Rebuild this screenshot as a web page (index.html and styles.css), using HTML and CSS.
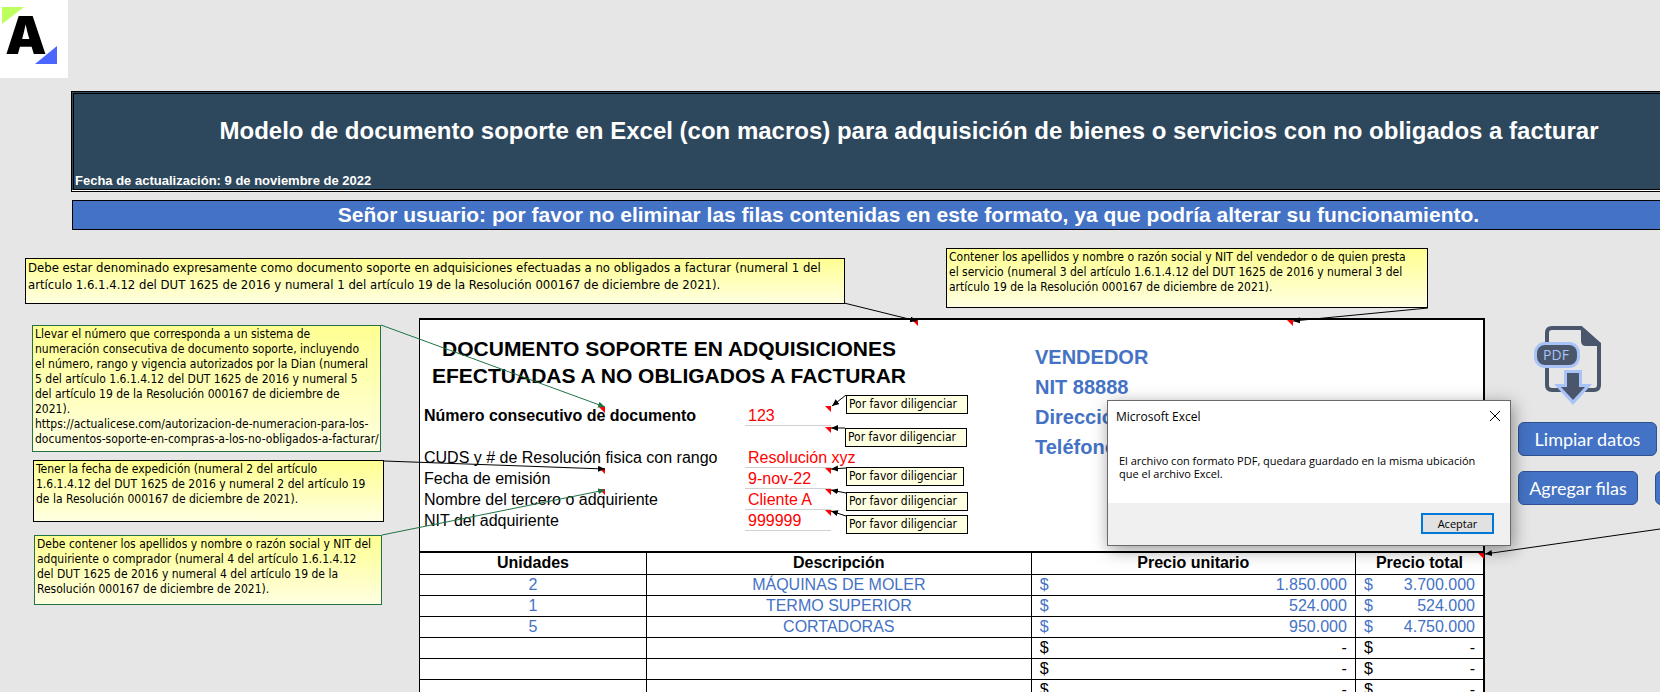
FILE: index.html
```html
<!DOCTYPE html>
<html lang="es">
<head>
<meta charset="utf-8">
<title>Modelo de documento soporte</title>
<link rel="stylesheet" href="styles.css">
</head>
<body>
<div class="logo">
  <svg width="68" height="78" viewBox="0 0 68 78" role="img" aria-label="Actualícese">
    <path d="M2 7H24L2 24Z" fill="#bdff5c"/>
    <path d="M57 46V64H35Z" fill="#4a66ff"/>
    <text class="logo-letter" x="26" y="54" text-anchor="middle">A</text>
  </svg>
</div>
<header class="banner">
  <div class="banner-inner">
    <h1 class="banner-title">Modelo de documento soporte en Excel (con macros) para adquisición de bienes o servicios con no obligados a facturar</h1>
    <p class="banner-date">Fecha de actualización: 9 de noviembre de 2022</p>
  </div>
</header>
<p class="notice">Señor usuario: por favor no eliminar las filas contenidas en este formato, ya que podría alterar su funcionamiento.</p>

<main class="workspace">
  <section class="sheet">
    <div class="sheet-head">
      <div class="doc">
        <h2 class="doc-title">DOCUMENTO SOPORTE EN ADQUISICIONES<br>EFECTUADAS A NO OBLIGADOS A FACTURAR</h2>
        <dl class="fields">
          <dt class="strong">Número consecutivo de documento</dt><dd>123</dd>
          <dt></dt><dd class="blank"></dd>
          <dt>CUDS y # de Resolución fisica con rango</dt><dd>Resolución xyz</dd>
          <dt>Fecha de emisión</dt><dd>9-nov-22</dd>
          <dt>Nombre del tercero o adquiriente</dt><dd>Cliente A</dd>
          <dt>NIT del adquiriente</dt><dd>999999</dd>
        </dl>
      </div>
      <div class="vendor">
        <p>VENDEDOR</p>
        <p>NIT 88888</p>
        <p>Dirección</p>
        <p>Teléfono</p>
      </div>
    </div>
    <table class="items">
      <colgroup><col class="c-units"><col class="c-desc"><col class="c-price"><col class="c-total"></colgroup>
      <thead><tr><th>Unidades</th><th>Descripción</th><th>Precio unitario</th><th>Precio total</th></tr></thead>
      <tbody>
        <tr class="filled"><td>2</td><td>MÁQUINAS DE MOLER</td><td><div class="money"><span>$</span><span>1.850.000</span></div></td><td><div class="money"><span>$</span><span>3.700.000</span></div></td></tr>
        <tr class="filled"><td>1</td><td>TERMO SUPERIOR</td><td><div class="money"><span>$</span><span>524.000</span></div></td><td><div class="money"><span>$</span><span>524.000</span></div></td></tr>
        <tr class="filled"><td>5</td><td>CORTADORAS</td><td><div class="money"><span>$</span><span>950.000</span></div></td><td><div class="money"><span>$</span><span>4.750.000</span></div></td></tr>
        <tr><td></td><td></td><td><div class="money"><span>$</span><span>-</span></div></td><td><div class="money"><span>$</span><span>-</span></div></td></tr>
        <tr><td></td><td></td><td><div class="money"><span>$</span><span>-</span></div></td><td><div class="money"><span>$</span><span>-</span></div></td></tr>
        <tr><td></td><td></td><td><div class="money"><span>$</span><span>-</span></div></td><td><div class="money"><span>$</span><span>-</span></div></td></tr>
      </tbody>
    </table>
  </section>
  <aside class="actions">
    <svg class="pdf-icon" width="68" height="82" viewBox="0 0 68 82" role="img" aria-label="Descargar PDF">
      <path d="M47 3H18Q13 3 13 8V60Q13 65 18 65H60Q65 65 65 60V19Z" fill="none" stroke="#4a566c" stroke-width="4"/>
      <path d="M47 2L67 21H52Q47 21 47 16Z" fill="#4a566c"/>
      <rect x="0" y="17" width="46" height="26" rx="11" fill="#a9c3f7"/>
      <rect x="3" y="20" width="40" height="20" rx="8" fill="#4a566c"/>
      <path d="M30 45H48V59H58L39 80L20 59H30Z" fill="#a9c3f7"/>
      <path d="M33 48H45V62H51L39 75L27 62H33Z" fill="#4a566c"/>
      <text class="pdf-label" x="22" y="35" text-anchor="middle">PDF</text>
    </svg>
    <button class="btn btn-wide" type="button">Limpiar datos</button>
    <div class="btn-row">
      <button class="btn" type="button">Agregar filas</button>
      <button class="btn" type="button" aria-label="Más acciones"></button>
    </div>
  </aside>
</main>

<svg class="connectors" width="1660" height="692" aria-hidden="true">
  <defs>
    <marker id="arrow" markerWidth="8" markerHeight="8" refX="7" refY="3" orient="auto" markerUnits="userSpaceOnUse"><path d="M0 0L7 3L0 6Z" fill="#000"/></marker>
    <marker id="arrow-green" markerWidth="8" markerHeight="8" refX="7" refY="3" orient="auto" markerUnits="userSpaceOnUse"><path d="M0 0L7 3L0 6Z" fill="#217346"/></marker>
  </defs>
  <path class="flag" d="M912 320h6v6zM1287 320h6v6zM599 407h6v6zM599 468h6v6zM599 489h6v6zM825 406h6v6zM825 427h6v6zM825 468h6v6zM825 489h6v6zM825 510h6v6zM1478 553h6v6z"/>
  <path class="link" d="M844 303L917 321"/>
  <path class="link" d="M1428 308L1293 321"/>
  <path class="link green" d="M381 325L605 407"/>
  <path class="link" d="M384 461L605 469"/>
  <path class="link green" d="M382 535L605 490"/>
  <path class="link" d="M846 395L832 406"/>
  <path class="link" d="M845 428L831 428"/>
  <path class="link" d="M846 468L831 469"/>
  <path class="link" d="M846 493L831 490"/>
  <path class="link" d="M846 516L831 511"/>
  <path class="link" d="M1660 529L1485 554"/>
</svg>

<div class="note n-name">Debe estar denominado expresamente como documento soporte en adquisiciones efectuadas a no obligados a facturar (numeral 1 del<br>artículo 1.6.1.4.12 del DUT 1625 de 2016 y numeral 1 del artículo 19 de la Resolución 000167 de diciembre de 2021).</div>
<div class="note n-seller">Contener los apellidos y nombre o razón social y NIT del vendedor o de quien presta<br>el servicio (numeral 3 del artículo 1.6.1.4.12 del DUT 1625 de 2016 y numeral 3 del<br>artículo 19 de la Resolución 000167 de diciembre de 2021).</div>
<div class="note green n-number">Llevar el número que corresponda a un sistema de<br>numeración consecutiva de documento soporte, incluyendo<br>el número, rango y vigencia autorizados por la Dian (numeral<br>5 del artículo 1.6.1.4.12 del DUT 1625 de 2016 y numeral 5<br>del artículo 19 de la Resolución 000167 de diciembre de<br>2021).<br>https://actualicese.com/autorizacion-de-numeracion-para-los-<br>documentos-soporte-en-compras-a-los-no-obligados-a-facturar/</div>
<div class="note n-date">Tener la fecha de expedición (numeral 2 del artículo<br>1.6.1.4.12 del DUT 1625 de 2016 y numeral 2 del artículo 19<br>de la Resolución 000167 de diciembre de 2021).</div>
<div class="note green n-buyer">Debe contener los apellidos y nombre o razón social y NIT del<br>adquiriente o comprador (numeral 4 del artículo 1.6.1.4.12<br>del DUT 1625 de 2016 y numeral 4 del artículo 19 de la<br>Resolución 000167 de diciembre de 2021).</div>
<div class="tip t1">Por favor diligenciar</div>
<div class="tip t2">Por favor diligenciar</div>
<div class="tip t3">Por favor diligenciar</div>
<div class="tip t4">Por favor diligenciar</div>
<div class="tip t5">Por favor diligenciar</div>

<div class="dialog" role="dialog" aria-labelledby="dlg-title">
  <div class="dialog-bar">
    <span id="dlg-title">Microsoft Excel</span>
    <button class="close" type="button" aria-label="Cerrar"><svg width="12" height="12" viewBox="0 0 12 12"><path d="M1 1L11 11M11 1L1 11" stroke="#000" fill="none"/></svg></button>
  </div>
  <p class="dialog-text">El archivo con formato PDF, quedara guardado en la misma ubicación<br>que el archivo Excel.</p>
  <div class="dialog-foot"><button class="ok" type="button">Aceptar</button></div>
</div>
</body>
</html>
```
FILE: styles.css
```css
* { box-sizing: border-box; }
body {
  margin: 0;
  min-height: 100vh;
  height: 100vh;
  overflow: hidden;
  position: relative;
  background: #e6e6e6;
  color: #000;
  font-family: "Liberation Sans", Arial, sans-serif;
}
h1, h2, p, dl, dd { margin: 0; }
button { font: inherit; padding: 0; }

.logo { width: 68px; height: 78px; background: #fff; }
.logo svg { display: block; }
.logo-letter { font: 900 52px Inter, sans-serif; }

.banner {
  margin: 13px 0 0 71px;
  border: 1px solid #000;
  border-right: 0;
  padding: 1px 0 1px 1px;
  background: linear-gradient(#fff, #fff) bottom / 100% 1px no-repeat padding-box, #2d475c;
}
.banner-inner {
  display: flex;
  flex-direction: column;
  height: 97px;
  border: 1px solid #000;
  border-right: 0;
  color: #fff;
  font-weight: bold;
}
.banner-title {
  flex: 1;
  padding: 22px 0 0 84px;
  text-align: center;
  font-size: 24px;
  line-height: 30px;
  white-space: nowrap;
}
.banner-date { padding-left: 1px; font-size: 13px; line-height: 16px; }
.notice {
  margin: 8px 0 0 72px;
  border: 1px solid #000;
  border-right: 0;
  padding-left: 84px;
  background: #4472c4;
  color: #fff;
  font-size: 21px;
  font-weight: bold;
  line-height: 28px;
  text-align: center;
  white-space: nowrap;
}

.workspace {
  display: grid;
  grid-template-columns: minmax(0, 1fr) 175px;
  padding: 88px 0 0 419px;
}
.sheet {
  background: #fff;
  border: 1px solid #000;
  border-width: 2px 2px 0 1px;
  min-width: 0;
}
.sheet-head { display: flex; height: 231px; }
.doc { flex: 0 0 611px; padding: 15px 0 0 4px; }
.doc-title {
  width: 490px;
  text-align: center;
  font-size: 21px;
  line-height: 27px;
  white-space: nowrap;
}
.fields {
  display: grid;
  grid-template-columns: 321px 86px;
  grid-auto-rows: 21px;
  padding-top: 16px;
  font-size: 16px;
  line-height: 21px;
  white-space: nowrap;
}
.fields dd { padding-left: 3px; color: #f00; border-bottom: 1px solid #d0d0d0; }
.fields dd.blank { border: 0; }
.strong { font-weight: bold; }
.vendor {
  padding: 22px 0 0 4px;
  color: #4472c4;
  font-size: 20px;
  font-weight: bold;
  line-height: 30px;
}

.items {
  width: 100%;
  table-layout: fixed;
  border-collapse: collapse;
  border-top: 2px solid #000;
  font-size: 16px;
  line-height: 20px;
}
.c-units { width: 21.3%; }
.c-desc { width: 36.2%; }
.c-price { width: 30.5%; }
.items th, .items td {
  height: 21px;
  padding: 0 8px;
  text-align: center;
  border: 1px solid #000;
  border-width: 0 1px 1px 0;
}
.items th { height: 22px; white-space: nowrap; }
.items th:last-child, .items td:last-child { border-right: 0; }
.filled { color: #4472c4; }
.money { display: flex; justify-content: space-between; }

.actions { padding: 7px 0 0 33px; overflow: hidden; }
.pdf-icon { display: block; margin-left: 16px; }
.btn {
  flex: none;
  width: 120px;
  height: 34px;
  border: 1px solid #2f528f;
  border-radius: 6px;
  background: #4472c4;
  color: #fff;
  font: 18px Lato, Carlito, sans-serif;
}
.btn-wide { width: 139px; margin-top: 15px; }
.btn-row { display: flex; gap: 17px; margin-top: 15px; }
.pdf-label { font: 14px "Open Sans", sans-serif; fill: #a9c3f7; }

.connectors { position: absolute; left: 0; top: 0; pointer-events: none; }
.flag { fill: #f00; }
.link { fill: none; stroke: #000; marker-end: url(#arrow); }
.link.green { stroke: #217346; marker-end: url(#arrow-green); }

.note, .tip {
  position: absolute;
  border: 1px solid #000;
  font-family: "DejaVu Sans Condensed", "DejaVu Sans", sans-serif;
  font-size: 12px;
  white-space: nowrap;
}
.note {
  padding: 1px 2px;
  background: linear-gradient(#ffff91, #ffffe1);
  line-height: 15px;
}
.note.green { border-color: #217346; }
.tip { padding: 0 2px; background: #ffffe1; width: 122px; height: 19px; line-height: 17px; }
.n-name { left: 25px; top: 258px; width: 820px; height: 46px; padding-top: 0; font-size: 13px; line-height: 17px; }
.n-seller { left: 946px; top: 248px; width: 482px; height: 60px; }
.n-number { left: 32px; top: 325px; width: 349px; height: 127px; }
.n-date { left: 33px; top: 460px; width: 351px; height: 62px; }
.n-buyer { left: 34px; top: 535px; width: 348px; height: 70px; }
.t1 { left: 846px; top: 395px; }
.t2 { left: 845px; top: 428px; }
.t3 { left: 846px; top: 467px; width: 118px; }
.t4 { left: 846px; top: 492px; }
.t5 { left: 846px; top: 515px; }

.dialog {
  position: absolute;
  left: 1107px;
  top: 400px;
  width: 404px;
  border: 1px solid #6a6a6a;
  background: #fff;
  box-shadow: 2px 4px 16px rgba(0, 0, 0, .4);
  font-family: "Open Sans", "Noto Sans", sans-serif;
  font-size: 11px;
}
.dialog-bar {
  display: flex;
  justify-content: space-between;
  align-items: center;
  height: 30px;
  padding: 0 9px 0 8px;
  font-size: 12px;
}
.close { width: 12px; height: 12px; border: 0; background: none; line-height: 0; }
.dialog-text { padding: 23px 11px; line-height: 13px; white-space: nowrap; }
.dialog-foot { display: flex; justify-content: flex-end; padding: 10px 16px 11px; background: #f0f0f0; }
.ok { width: 73px; height: 21px; border: 2px solid #0078d7; background: #e1e1e1; line-height: 16px; }
```
